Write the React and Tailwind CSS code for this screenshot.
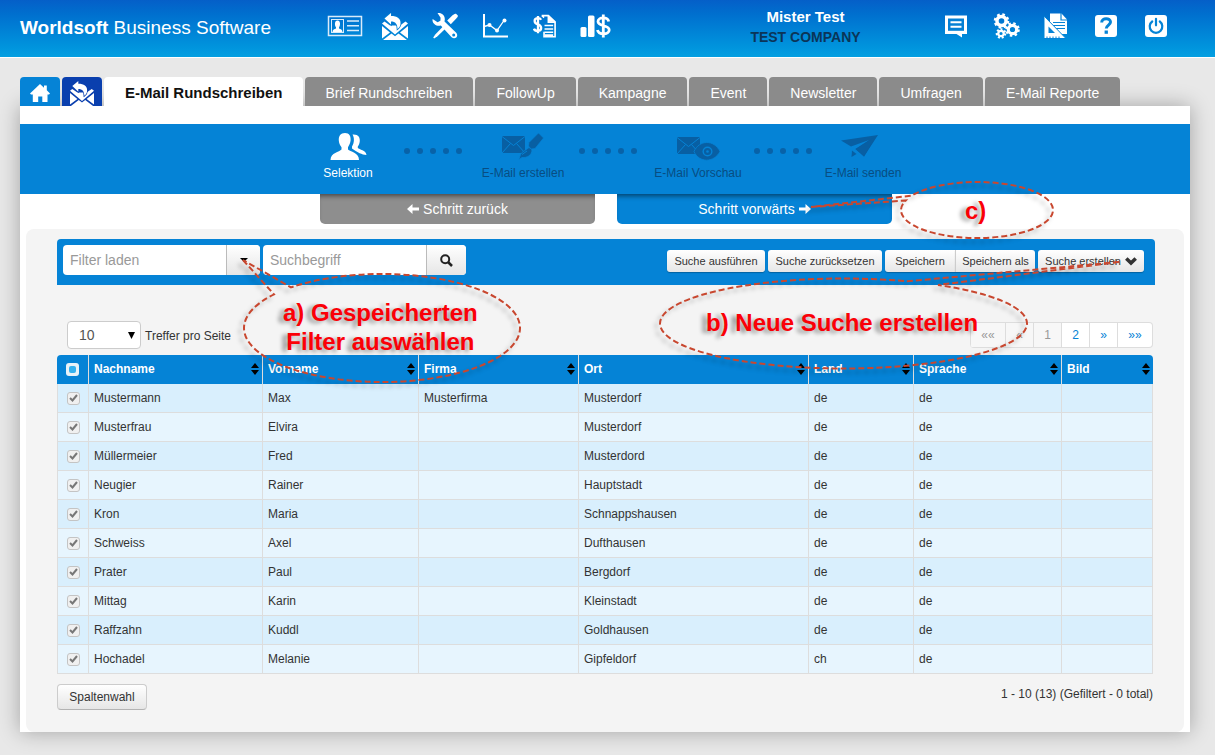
import React from "react";

const rows = [
  ["Mustermann", "Max", "Musterfirma", "Musterdorf", "de", "de"],
  ["Musterfrau", "Elvira", "", "Musterdorf", "de", "de"],
  ["Müllermeier", "Fred", "", "Musterdord", "de", "de"],
  ["Neugier", "Rainer", "", "Hauptstadt", "de", "de"],
  ["Kron", "Maria", "", "Schnappshausen", "de", "de"],
  ["Schweiss", "Axel", "", "Dufthausen", "de", "de"],
  ["Prater", "Paul", "", "Bergdorf", "de", "de"],
  ["Mittag", "Karin", "", "Kleinstadt", "de", "de"],
  ["Raffzahn", "Kuddl", "", "Goldhausen", "de", "de"],
  ["Hochadel", "Melanie", "", "Gipfeldorf", "ch", "de"],
];

const columns = ["Nachname", "Vorname", "Firma", "Ort", "Land", "Sprache", "Bild"];

const tabs = ["Brief Rundschreiben", "FollowUp", "Kampagne", "Event", "Newsletter", "Umfragen", "E-Mail Reporte"];

/* ---------- icons ---------- */

function ContactIcon() {
  return (
    <svg width="36" height="22" viewBox="0 0 36 22" fill="none" stroke="#d8ebfa">
      <rect x="1.500" y="1.500" width="33" height="19" strokeWidth="1.5" />
      <rect x="4.500" y="4.500" width="12" height="13" strokeWidth="1" />
      <path d="M5.500 17c0-2.500 2-3 3.500-3.500v-1.300C7.500 10.500 7.300 5.500 10.500 5.500s3 5 1.500 6.700v1.300c1.500.5 3.500 1 3.500 3.500z" fill="#fff" stroke="none" />
      <path d="M20 6h12M20 10.700h12M20 15.500h12" strokeWidth="1.500" />
    </svg>
  );
}

function MailReplyIcon({ gap = "#0580d4", width = 26, height = 27 }) {
  return (
    <svg width={width} height={height} viewBox="0 0 26 27" fill="#fff">
      <path d="M0 13l8 6.500L0 25.500zM26 13l-8 6.500 8 6zM1 27l8.500-6.500 3.500 2.800 3.500-2.800 8.500 6.500z" />
      <path d="M0 10.500L2.500 8.500 8 12.500h10l5.500-4 2.500 2L13 21.500z" />
      <path d="M2.500 5.500L9 0v3c6 0 10 2.500 9.500 7.500 0 2-1 4-3 5.500 0-5-2-7.500-6.500-7.500V11.500z" stroke={gap} strokeWidth="1.600" paintOrder="stroke" />
    </svg>
  );
}

function ToolsIcon() {
  return (
    <svg width="26" height="26" viewBox="0 0 26 26" fill="#fff">
      <path d="M5.500 0C9.500-.5 13 2 12.800 6.500l-.3 2 11.700 11.200c3 3.500-1.200 7.500-4.600 4.600L8.800 12.500C5 13.500 1 11.500.5 7.500L.6 6l5 3.200 2.800-1.500.2-3z" />
      <circle cx="21.700" cy="22" r="1.500" fill="#0587d7" />
      <path d="M24 .8l1.800 1.800c.4 1-.5 2-1.500 2.900l-5.500 5.700-3.600-3.600 5.600-5.500C21.800 1.300 23 .3 24 .8z" />
      <path d="M11 13.500l2.300 2.200-7.800 7.500-3.300 2.300-1-1 2.300-3.300z" />
    </svg>
  );
}

function ChartIcon() {
  return (
    <svg width="26" height="24" viewBox="0 0 26 24" fill="none" stroke="#fff">
      <path d="M2 0v22.500h24" strokeWidth="2" />
      <path d="M2 12.500l5.500-1.500 7.500 5.500 7-10" strokeWidth="1.300" />
      <g fill="#fff" stroke="none">
        <circle cx="7.500" cy="11" r="2" />
        <circle cx="15" cy="16.500" r="2" />
        <circle cx="22.500" cy="6.500" r="2" />
      </g>
    </svg>
  );
}

function InvoiceIcon() {
  return (
    <svg width="24" height="25" viewBox="0 0 25 25" fill="none" stroke="#fff">
      <path d="M8.500 5.500C7 3 1.700 3.200 1.700 6.700 1.700 11.500 8.500 9 8.500 14c0 4-6.500 4-7.500.8M5.200 1.500v18" strokeWidth="2.400" />
      <path d="M9 1.200h7l7 6.500v15.500H11.500V18" strokeWidth="1.700" />
      <path d="M9.500 1.200l2 2M16 1v7h7" strokeWidth="1.700" />
      <path d="M16.500 1.500l6.500 6h-6.500z" fill="#fff" stroke="none" />
      <path d="M12 11.500h9M12 15h9M12 18.500h9M12 21.500h9" strokeWidth="1.600" />
    </svg>
  );
}

function SalesIcon() {
  return (
    <svg width="31" height="24" viewBox="0 0 31 24" fill="#fff">
      <rect x="0.500" y="13" width="6" height="10" rx="1.500" />
      <rect x="8" y="1.500" width="6.500" height="21.500" rx="1.500" />
      <path d="M28.700 7.500C27.700 2.500 18 3 18 7.500c0 5.500 11.200 3 11.200 8.500 0 5-10.700 5.200-11.700 0M23.300 .5v23" fill="none" stroke="#fff" strokeWidth="2.800" />
    </svg>
  );
}

function ChatIcon() {
  return (
    <svg width="24" height="24" viewBox="0 0 24 24">
      <path d="M1 1.500h22V20h-5v3.500L12.500 20H1z" fill="#fff" />
      <path d="M4 4.500h16v12.300H4z" fill="#0580d4" />
      <path d="M6.500 8.200h11M6.500 12.700h11" stroke="#fff" strokeWidth="2" />
    </svg>
  );
}

function Gear({ cx, cy, r, hole, teeth }) {
  const step = (2 * Math.PI * r) / teeth;
  return (
    <g fill="none" stroke="#fff">
      <circle cx={cx} cy={cy} r={r} strokeWidth="2.600" strokeDasharray={`${step * 0.5} ${step * 0.5}`} />
      <circle cx={cx} cy={cy} r={(r + hole) / 2 - 0.2} strokeWidth={r - hole} />
    </g>
  );
}

function GearsIcon() {
  return (
    <svg width="27" height="26" viewBox="0 0 27 26">
      <Gear cx={8.500} cy={8} r={6.500} hole={3} teeth={8} />
      <Gear cx={19.500} cy={16.500} r={6} hole={2.800} teeth={8} />
      <Gear cx={8} cy={20.500} r={4} hole={1.800} teeth={7} />
    </svg>
  );
}

function TemplateIcon() {
  return (
    <svg width="24" height="26" viewBox="0 0 24 26">
      <path d="M6 .5h11.500L23 6.500V21H6z" fill="#fff" />
      <path d="M17 0v7h6.500" fill="none" stroke="#0583d6" strokeWidth="1.200" />
      <path d="M9 9.500h12M9 12.500h12M10 15.500h11" stroke="#0583d6" strokeWidth="1" />
      <path d="M0 3l22 22.500H0z" fill="#fff" stroke="#0583d6" strokeWidth="1" />
      <path d="M4.500 13.500l6.500 6.500H4.500z" fill="#0583d6" />
      <path d="M3 25.500v-2M6 25.500v-2M9 25.500v-2M12 25.500v-2M15 25.500v-2" stroke="#0583d6" strokeWidth="1" />
    </svg>
  );
}

function HelpIcon() {
  return (
    <svg width="22" height="22" viewBox="0 0 22 22">
      <rect width="22" height="22" rx="3" fill="#fff" />
      <path d="M6.700 7.600c0-5 8.800-5 8.800-.5 0 3-4.200 3-4.200 6.400" fill="none" stroke="#0583d6" strokeWidth="3" />
      <rect x="9.600" y="15.500" width="3.300" height="3.300" fill="#0583d6" />
    </svg>
  );
}

function PowerIcon() {
  return (
    <svg width="22" height="22" viewBox="0 0 22 22">
      <rect width="22" height="22" rx="3" fill="#fff" />
      <g fill="none" stroke="#0583d6" strokeWidth="2.200" strokeLinecap="round">
        <path d="M7.200 6.500a6.300 6.300 0 1 0 7.600 0" />
        <path d="M11 3.800v6.500" />
      </g>
    </svg>
  );
}

function HomeIcon() {
  return (
    <svg width="20" height="18" viewBox="0 0 20 18" fill="#fff">
      <path d="M10 0l4 3.700V1.500h2.800v4.800L20 9.500l-1 .9h-1.500V18h-5.200v-5.500H8.200V18H2.800v-7.600H1l-1-.9z" />
    </svg>
  );
}

function UsersIcon() {
  return (
    <svg width="37" height="28" viewBox="0 0 37 28" fill="#fff">
      <path d="M15 0c4.500 0 6 3.500 5.600 7.500-.3 3-1.600 5-2.600 6.700v2.300c2 2.300 11 3 11 10.500H.5C.5 19.500 9.500 19 11.500 16.500v-2.300C10 12.500 9 10.500 8.800 7.500 8.500 3 10.500 0 15 0z" />
      <path d="M22.500 1.500c6-.5 7.500 3 7.300 6.500-.2 2.500-1 4.300-2 5.500v1.500c1.500 1.700 8.200 2 8.700 7-5-.5-8.500-2.200-14.500-6.500v-2c2.500-4 2.500-8.500.5-12z" />
    </svg>
  );
}

function Envelope() {
  return (
    <g>
      <path d="M0 3h23v17H0z" fill="#085fa3" />
      <path d="M0 3.500l11.500 9L23 3.500M0 20l8.500-9.500M23 20l-8.500-9.500" fill="none" stroke="#0583d6" strokeWidth="1" />
    </g>
  );
}

function WriteIcon() {
  return (
    <svg width="42" height="28" viewBox="0 0 42 28">
      <Envelope />
      <path d="M16.500 27c1.500-2 1-5 3.500-7.500l7-5 3 2c0 6-5 8.500-10 8z" fill="#085fa3" stroke="#0583d6" strokeWidth="0.800" />
      <path d="M20 21.500l5-3.500" stroke="#0583d6" strokeWidth="1" />
      <path d="M36.500 0L41.500 5 33 15.500 29 16l-2.500-3 .5-3.500z" fill="#085fa3" stroke="#0583d6" strokeWidth="0.600" />
    </svg>
  );
}

function PreviewIcon() {
  return (
    <svg width="43" height="27" viewBox="0 0 43 27">
      <Envelope />
      <path d="M17 17.500C22 6 37 5 43 17.500 37 29 22 29 17 17.500z" fill="#085fa3" stroke="#0583d6" strokeWidth="0.800" />
      <circle cx="30.500" cy="17.500" r="5" fill="#0583d6" />
      <circle cx="30.500" cy="17.500" r="3.600" fill="#085fa3" />
      <circle cx="30.500" cy="17.500" r="1.300" fill="#0583d6" />
    </svg>
  );
}

function SendIcon() {
  return (
    <svg width="37" height="22" viewBox="0 0 37 22" fill="#085fa3">
      <path d="M37 0L0 5.500l10 6L28 5 14.500 14l8.500 7.500z" />
      <path d="M35 1.500L14.500 14l8.500 7.500z" />
      <path d="M11 15.500l4.500 3.500-5 3z" />
    </svg>
  );
}

function Arrow({ className }) {
  return (
    <svg className={className} width="12" height="10" viewBox="0 0 12 10" fill="#fff">
      <path d="M6.500 0L12 5l-5.500 5V6.500H0v-3h6.500z" />
    </svg>
  );
}

function SortIcon() {
  return (
    <svg className="shrink-0" width="8" height="12" viewBox="0 0 8 12" fill="#000">
      <path d="M4 0l4 5H0zM4 12L0 7h8z" />
    </svg>
  );
}

/* ---------- parts ---------- */

function IconButton({ label, children }) {
  return (
    <button type="button" aria-label={label} className="flex h-[52px] w-[50px] items-center justify-center">
      {children}
    </button>
  );
}

function Header() {
  return (
    <header className="flex h-[58px] border-b border-white bg-linear-to-b from-[#055fc8] to-[#049fe1] pr-[34px] pl-5 text-white">
      <h1 className="w-[300px] shrink-0 pt-4 text-[19px] leading-6">
        <b>Worldsoft</b> Business Software
      </h1>
      <nav className="flex shrink-0">
        <IconButton label="Kontakte"><ContactIcon /></IconButton>
        <IconButton label="Mailings"><MailReplyIcon /></IconButton>
        <IconButton label="Werkzeuge"><ToolsIcon /></IconButton>
        <IconButton label="Statistik"><ChartIcon /></IconButton>
        <IconButton label="Rechnungen"><InvoiceIcon /></IconButton>
        <IconButton label="Umsatz"><SalesIcon /></IconButton>
      </nav>
      <div className="min-w-0 flex-1 pt-[7px] pl-[60px] text-center font-bold whitespace-nowrap">
        <p className="text-[15px] leading-5">Mister Test</p>
        <p className="text-[14px] leading-5 text-[#0b3558]">TEST COMPANY</p>
      </div>
      <nav className="flex shrink-0">
        <IconButton label="Nachrichten"><ChatIcon /></IconButton>
        <IconButton label="Einstellungen"><GearsIcon /></IconButton>
        <IconButton label="Vorlagen"><TemplateIcon /></IconButton>
        <IconButton label="Hilfe"><HelpIcon /></IconButton>
        <IconButton label="Abmelden"><PowerIcon /></IconButton>
      </nav>
    </header>
  );
}

function Tabs() {
  return (
    <nav className="flex h-[29px] gap-[2px] text-[14px] leading-8 whitespace-nowrap">
      <a href="#home" aria-label="Startseite" className="flex w-10 items-center justify-center rounded-t-[4px] bg-[#0583d6] pt-[3px]">
        <HomeIcon />
      </a>
      <a href="#mail" aria-label="Mailing" className="flex w-10 items-center justify-center rounded-t-[4px] bg-[#0a3fae] pt-[3px]">
        <MailReplyIcon gap="#0a3fae" width={24} height={25} />
      </a>
      <a href="#rundschreiben" className="rounded-t-[4px] bg-white pr-5 pl-[21px] text-[15px] font-bold text-[#111]">
        E-Mail Rundschreiben
      </a>
      {tabs.map((t) => (
        <a key={t} href="#tab" className="rounded-t-[4px] bg-[#8b8b8b] px-[21px] text-white">
          {t}
        </a>
      ))}
    </nav>
  );
}

function Step({ icon, label, active, narrow }) {
  return (
    <li className={narrow ? "w-20" : "w-[100px]"}>
      <div className="flex h-[34px] items-end justify-center">{icon}</div>
      <p className={active ? "mt-[3px] text-white" : "mt-[3px] text-[#084d82]"}>{label}</p>
    </li>
  );
}

function Dots() {
  return (
    <li aria-hidden="true" className="flex w-[75px] gap-[7px] pt-[21px] pl-[6px]">
      {[0, 1, 2, 3, 4].map((i) => (
        <i key={i} className="size-[6px] rounded-full bg-[#0862a8]" />
      ))}
    </li>
  );
}

function Wizard() {
  return (
    <>
      <ol className="flex h-[70px] justify-center bg-[#0583d6] pt-[3px] pr-[9px] text-center text-[12px] leading-[18px] whitespace-nowrap">
        <Step active label="Selektion" icon={<UsersIcon />} />
        <Dots />
        <Step label="E-Mail erstellen" icon={<WriteIcon />} />
        <Dots />
        <Step label="E-Mail Vorschau" icon={<PreviewIcon />} />
        <Dots />
        <Step narrow label="E-Mail senden" icon={<span className="pr-2 pb-1"><SendIcon /></span>} />
      </ol>
      <div className="flex justify-center gap-[22px] pl-[2px] text-[14px] text-white">
        <button type="button" className="flex h-[30px] w-[275px] items-center justify-center gap-1 rounded-b-[5px] bg-[#8e8e8e] shadow-[inset_0_5px_5px_-3px_rgba(0,0,0,0.5)]">
          <Arrow className="rotate-180" />
          Schritt zurück
        </button>
        <button type="button" className="flex h-[30px] w-[275px] items-center justify-center gap-1 rounded-b-[5px] bg-[#0583d6] shadow-[inset_0_5px_5px_-3px_rgba(0,0,0,0.5)]">
          Schritt vorwärts
          <Arrow />
        </button>
      </div>
    </>
  );
}

const softButton = "bg-linear-to-b from-white to-[#e6e6e6] text-[#333]";
const smallButton = "flex h-[22px] items-center justify-center rounded-[3px] bg-linear-to-b from-white to-[#e6e6e6] text-[#333] shadow-[0_1px_1px_rgba(0,0,0,0.25)]";

function Toolbar() {
  return (
    <div className="flex h-[46px] items-start rounded-t-[4px] bg-[#0583d6] pt-[6px] pr-[11px] pl-[6px]">
      <div className="flex h-[30px] w-[197px] overflow-hidden rounded-[4px] bg-white">
        <input aria-label="Filter laden" placeholder="Filter laden" className="min-w-0 flex-1 px-[7px] text-[14px] placeholder:text-[#999]" />
        <button type="button" aria-label="Filter öffnen" className={`flex w-[34px] items-center justify-center border-l border-[#bbb] ${softButton}`}>
          <svg width="8" height="4" viewBox="0 0 8 4"><path d="M0 0h8L4 4z" /></svg>
        </button>
      </div>
      <div className="ml-[3px] flex h-[30px] w-[203px] overflow-hidden rounded-[4px] bg-white">
        <input aria-label="Suchbegriff" placeholder="Suchbegriff" className="min-w-0 flex-1 px-[7px] text-[14px] placeholder:text-[#999]" />
        <button type="button" aria-label="Suchen" className={`flex w-10 items-center justify-center border-l border-[#bbb] ${softButton}`}>
          <svg width="13" height="13" viewBox="0 0 13 13" fill="none" stroke="#222">
            <circle cx="5.200" cy="5.200" r="4" strokeWidth="2" />
            <path d="M8 8l4 4" strokeWidth="2.500" />
          </svg>
        </button>
      </div>
      <div className="ml-auto flex gap-[3px] pt-[5px] text-[11px] whitespace-nowrap">
        <button type="button" className={`${smallButton} w-[98px]`}>Suche ausführen</button>
        <button type="button" className={`${smallButton} w-[114px]`}>Suche zurücksetzen</button>
        <div className="flex">
          <button type="button" className={`${smallButton} w-[70px] rounded-r-none`}>Speichern</button>
          <button type="button" className={`${smallButton} w-20 rounded-l-none border-l border-[#ccc]`}>Speichern als</button>
        </div>
        <button type="button" className={`${smallButton} w-[106px] gap-1`}>
          Suche erstellen
          <svg width="12" height="9" viewBox="0 0 12 9" fill="none" stroke="#333" strokeWidth="3.600">
            <path d="M1.300 1.500L6 6l4.700-4.500" />
          </svg>
        </button>
      </div>
    </div>
  );
}

function Pager() {
  const cell = "h-full border-l border-[#ddd]";
  return (
    <nav aria-label="Seiten" className="flex h-[26px] overflow-hidden rounded-[4px] border border-l-0 border-[#ddd] bg-white text-[12px] text-[#0583d6]">
      <button type="button" disabled className={`${cell} w-[35px] bg-[#f7f7f7] text-[#999]`}>««</button>
      <button type="button" disabled className={`${cell} w-7 bg-[#f7f7f7] text-[#999]`}>«</button>
      <button type="button" disabled className={`${cell} w-7 bg-[#f7f7f7] text-[#999]`}>1</button>
      <button type="button" className={`${cell} w-7`}>2</button>
      <button type="button" className={`${cell} w-7`}>»</button>
      <button type="button" className={`${cell} w-[35px]`}>»»</button>
    </nav>
  );
}

function RowCheck({ name }) {
  return (
    <label className="mx-auto grid size-[13px] place-items-center">
      <input type="checkbox" defaultChecked aria-label={name} className="col-start-1 row-start-1 size-[13px] appearance-none rounded-[3px] border border-[#c4c4c4] bg-[#f0f0f0]" />
      <svg className="pointer-events-none z-10 col-start-1 row-start-1" width="9" height="8" viewBox="0 0 9 8" fill="none" stroke="#777" strokeWidth="2">
        <path d="M1 4l2.500 2.500L8 1" />
      </svg>
    </label>
  );
}

function ContactTable() {
  return (
    <table className="w-full table-fixed border-separate border-spacing-0 text-left text-[12px] text-[#333]">
      <colgroup>
        <col className="w-8" />
        <col className="w-[174px]" />
        <col className="w-[156px]" />
        <col className="w-[160px]" />
        <col />
        <col className="w-[105px]" />
        <col className="w-[148px]" />
        <col className="w-[91px]" />
      </colgroup>
      <thead>
        <tr className="h-[29px] text-white">
          <th className="rounded-tl-[4px] border-r border-[#ddd] bg-[#0583d6] p-0">
            <label className="mx-auto grid size-[13px] place-items-center">
              <input type="checkbox" aria-label="Alle auswählen" className="col-start-1 row-start-1 size-[13px] appearance-none rounded-[3px] bg-[#e8f2f8]" />
              <span className="pointer-events-none col-start-1 row-start-1 size-[7px] rounded-[2px] bg-[#35b1ee]" />
            </label>
          </th>
          {columns.map((c) => (
            <th key={c} className="border-r border-[#ddd] bg-[#0583d6] pt-0 pr-[3px] pb-[2px] pl-[5px] last:rounded-tr-[4px] last:border-r-0">
              <div className="flex items-center justify-between">
                {c}
                <SortIcon />
              </div>
            </th>
          ))}
        </tr>
      </thead>
      <tbody>
        {rows.map((r) => (
          <tr key={r[0]} className="h-[29px] odd:bg-[#d9effd] even:bg-[#e7f5fe]">
            <td className="border-r border-b border-l border-[#ddd] p-0">
              <RowCheck name={r[0]} />
            </td>
            {r.map((v, i) => (
              <td key={i} className="border-r border-b border-[#ddd] py-0 pl-[5px]">{v}</td>
            ))}
            <td className="border-r border-b border-[#ddd] p-0" />
          </tr>
        ))}
      </tbody>
    </table>
  );
}

const calloutText = "absolute text-center text-[24px] leading-[29px] font-bold whitespace-nowrap text-[#fb0007] [text-shadow:-5px_2px_4px_rgba(0,0,0,0.4)]";

function Callouts() {
  return (
    <div className="pointer-events-none absolute inset-0 z-20">
      <svg className="absolute top-0 left-0 drop-shadow-[-4px_4px_2px_rgba(0,0,0,0.25)]" width="1100" height="400" viewBox="0 0 1100 400" overflow="visible" fill="none" stroke="#c8472f" strokeWidth="2" strokeDasharray="6 3">
        <path d="M243 260L274 294.400A138 54 0 0 0 244 328A138 54 0 0 0 382 382A138 54 0 0 0 520 328A138 54 0 0 0 382 274A138 54 0 0 0 291 287.400Z" />
        <path d="M1119 262L907 281.300A183.500 45 0 0 0 843.500 278.500A183.500 45 0 0 0 660 323.500A183.500 45 0 0 0 843.500 368.500A183.500 45 0 0 0 1027 323.500A183.500 45 0 0 0 938 285Z" />
        <path d="M811 207L905.700 200.500A76 28 0 0 0 901 210A76 28 0 0 0 977 238A76 28 0 0 0 1053 210A76 28 0 0 0 977 182A76 28 0 0 0 911.700 195.700Z" />
      </svg>
      <p className={`${calloutText} top-[298px] left-[283px]`}>
        a) Gespeicherten
        <br />
        Filter auswählen
      </p>
      <p className={`${calloutText} top-[308px] left-[706px]`}>b) Neue Suche erstellen</p>
      <p className={`${calloutText} top-[196px] left-[965px]`}>c)</p>
    </div>
  );
}

export default function App() {
  return (
    <div className="relative min-h-screen overflow-hidden bg-[#e8e8e8] font-['Liberation_Sans',Arial,sans-serif]">
      <Header />
      <main className="pt-[19px] pr-[25px] pb-[23px] pl-5">
        <Tabs />
        <div className="bg-white pt-[18px] shadow-[0_0_20px_rgba(0,0,0,0.3)]">
          <Wizard />
          <section className="mx-[6px] mt-[5px] rounded-[8px] bg-[#f4f4f4] pt-[10px] pr-[29px] pb-[22px] pl-[31px]">
            <Toolbar />
            <div className="mr-[2px]">
              <div className="mt-9 flex items-center justify-between pl-[10px] text-[12px] text-[#333]">
                <label className="flex items-center gap-1">
                  <span className="grid h-7 w-[74px] items-center rounded-[4px] border border-[#ccc] bg-white">
                    <select className="col-start-1 row-start-1 h-full w-full appearance-none pl-[11px] text-[14px] text-[#555]">
                      <option>10</option>
                    </select>
                    <svg className="pointer-events-none z-10 col-start-1 row-start-1 mr-[5px] justify-self-end" width="7" height="7" viewBox="0 0 7 7"><path d="M0 0h7L3.500 7z" /></svg>
                  </span>
                  <span className="pt-[2px]">Treffer pro Seite</span>
                </label>
                <Pager />
              </div>
              <div className="pt-[6px]">
                <ContactTable />
              </div>
              <div className="mt-[10px] flex items-start justify-between text-[12px] text-[#333]">
                <button type="button" className="h-[26px] w-[90px] rounded-[4px] border border-[#ccc] border-b-[#b3b3b3] bg-linear-to-b from-white to-[#e6e6e6]">
                  Spaltenwahl
                </button>
                <p className="leading-5">1 - 10 (13) (Gefiltert - 0 total)</p>
              </div>
            </div>
          </section>
        </div>
      </main>
      <Callouts />
    </div>
  );
}
